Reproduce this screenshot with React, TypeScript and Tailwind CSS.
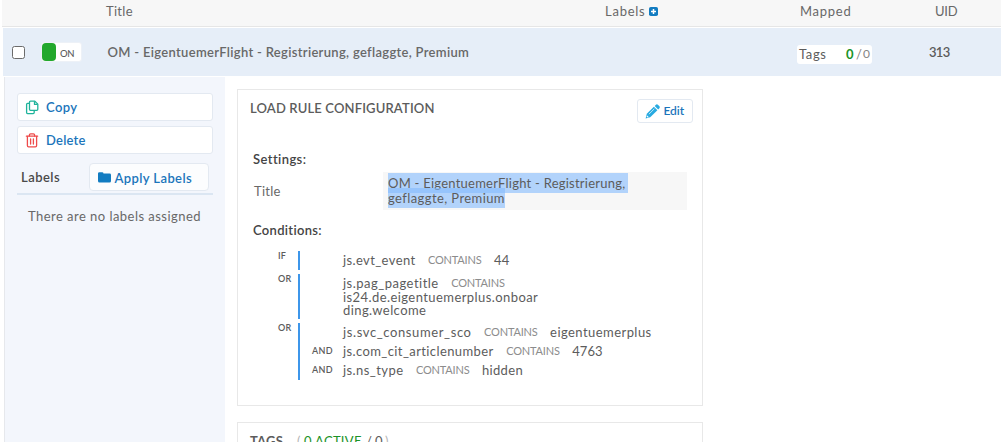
import type { ReactNode } from 'react';

function CopyIcon() {
  return (
    <svg width="14" height="15" viewBox="0 0 14 15" fill="none" stroke="#1fb39b" strokeWidth="1.3" strokeLinejoin="round">
      <path d="M5.5 1.1h4.3l3 3v5.2a1 1 0 0 1-1 1H5.5a1 1 0 0 1-1-1V2.1a1 1 0 0 1 1-1z" />
      <path d="M9.5 1.3v3.1h3.1" />
      <path d="M4.3 3.4H2.6a1 1 0 0 0-1 1v8.2a1 1 0 0 0 1 1h5.6a1 1 0 0 0 1-1v-2" />
    </svg>
  );
}

function TrashIcon() {
  return (
    <svg width="14" height="15" viewBox="0 0 14 15" fill="none" stroke="#ee4b4b" strokeWidth="1.3" strokeLinejoin="round" strokeLinecap="round">
      <path d="M1.4 3.2h11.2" />
      <path d="M4.4 3V2.1a1.2 1.2 0 0 1 1.2-1.2h2.8a1.2 1.2 0 0 1 1.2 1.2V3" />
      <path d="M2.4 3.5v9.1a1.2 1.2 0 0 0 1.2 1.2h6.8a1.2 1.2 0 0 0 1.2-1.2V3.5" />
      <path d="M5.6 6v5M8.4 6v5" />
    </svg>
  );
}

function FolderIcon() {
  return (
    <svg width="13" height="11" viewBox="0 0 13 11" fill="#127cc1">
      <path d="M0 1.6A1.4 1.4 0 0 1 1.4.2h2.7a1.4 1.4 0 0 1 1.4 1.4h5.9A1.5 1.5 0 0 1 13 3.1v5.8a1.5 1.5 0 0 1-1.5 1.5h-10A1.5 1.5 0 0 1 0 8.9z" />
    </svg>
  );
}

function PencilIcon() {
  return (
    <svg width="15" height="15" viewBox="0 0 15 15">
      <path d="M0.6 14.4l1.2-4.6L8.9 2.7l3.5 3.5-7.2 7.1z" fill="#27aae1" />
      <path d="M9.7 1.9l1-1a1.7 1.7 0 0 1 2.4 0l1.1 1.1a1.7 1.7 0 0 1 0 2.4l-1 1z" fill="#27aae1" />
      <path d="M3.9 10.2l5.4-5.4" stroke="#fff" strokeWidth="0.7" />
      <path d="M1.8 11.8l1.5 1.5" stroke="#fff" strokeWidth="1.1" />
    </svg>
  );
}

function Condition({ and, name, nameClass, children, valueClass }: { and?: boolean; name: string; nameClass: string; children?: ReactNode; valueClass?: string }) {
  return (
    <div className="flex h-[19px] items-center">
      <span className="mt-px w-[31px] shrink-0 text-[9px] font-semibold tracking-[0.35px]">{and ? 'AND' : ''}</span>
      <span className={nameClass}>{name}</span>
      <span className="ml-[12.5px] text-[11px] tracking-[-0.19px] text-[#8c8c8c]">CONTAINS</span>
      {children && <span className={`ml-[12.5px] ${valueClass}`}>{children}</span>}
    </div>
  );
}

export default function App() {
  return (
    <div className="h-[442px] w-full overflow-hidden bg-white font-[Lato,sans-serif] text-[13px] leading-[16px] whitespace-nowrap text-[#5c5c5c]">
      <header className="ml-[2px] flex h-[27px] border-b border-[#e6e6e6] bg-[#f7f7f7] pt-[3px] text-[#686868]">
        <span className="ml-[104px] w-[499px] tracking-[0.3px]">Title</span>
        <span className="flex w-[195px] tracking-[0.75px]">
          Labels
          <svg className="mt-1 ml-[4px]" width="9" height="9" viewBox="0 0 9 9">
            <rect width="9" height="9" rx="1.8" fill="#127cc1" />
            <path d="M4.5 2v5M2 4.5h5" stroke="#fff" strokeWidth="1.5" />
          </svg>
        </span>
        <span className="w-[135px] tracking-[0.74px]">Mapped</span>
        <span className="tracking-[-0.2px]">UID</span>
      </header>

      <section className="mt-px ml-[3px] flex h-12 bg-[#e6eef8]">
        <div className="mt-[18px] ml-[9px] size-[13px] rounded-[2.5px] border border-[#6b6b6b] bg-white" />
        <div className="mt-[14px] ml-4 flex h-5 w-[41px] rounded-[3px] border border-[#edf1f7] bg-white">
          <div className="h-[18px] w-[14px] rounded-[4px] bg-[#22a82c]" />
          <span className="mt-[3px] ml-1 text-[9.5px] font-medium tracking-[-0.35px]">ON</span>
        </div>
        <span className="mt-4 ml-[25.5px] w-[689.5px] font-semibold tracking-[0.31px] text-[#686868]">OM - EigentuemerFlight - Registrierung, geflaggte, Premium</span>
        <div className="mt-[17px] flex h-[19px] w-[75px] rounded-[3px] bg-white pt-px pl-[2px]">
          <span className="w-[47px] tracking-[0.61px]">Tags</span>
          <span className="font-bold text-[#1b9328]">0</span>
          <span className="ml-[2.5px] text-[#858585]">/</span>
          <span className="ml-px text-[12px] text-[#858585]">0</span>
        </div>
        <span className="mt-4 ml-[57px] font-semibold tracking-[-0.7px]">313</span>
      </section>

      <div className="mt-px flex h-[365px]">
        <aside className="ml-1 w-[221px] shrink-0 border-l border-[#e6e8ec] bg-[#f3f6fc] pt-4 pl-3">
          <button className="flex h-7 w-[196px] items-center rounded-[3px] border border-[#e3e9f1] bg-white pl-[7px] font-semibold text-[#1b75bb]">
            <CopyIcon />
            <span className="-mt-px ml-[7px] tracking-[0.41px]">Copy</span>
          </button>
          <button className="mt-[5px] flex h-7 w-[196px] items-center rounded-[3px] border border-[#e3e9f1] bg-white pl-[7px] font-semibold text-[#1b75bb]">
            <TrashIcon />
            <span className="-mt-px ml-[7px] tracking-[0.22px]">Delete</span>
          </button>
          <div className="mt-2 flex h-[33px] w-[196px] border-b-2 border-[#dbe6f2] pt-px pl-1">
            <span className="mt-[6px] w-[68px] font-semibold tracking-[0.46px] text-[#4a4a4a]">Labels</span>
            <button className="flex h-7 w-[120px] items-center rounded-[4px] border border-[#e3e9f1] bg-[#fcfdfe] pl-2 font-semibold text-[#1b75bb]">
              <FolderIcon />
              <span className="mt-[2px] ml-[3.5px] tracking-[0.4px]">Apply Labels</span>
            </button>
          </div>
          <p className="mt-[13px] ml-[11px] tracking-[0.46px] text-[#686868]">There are no labels assigned</p>
        </aside>

        <main className="mt-3 ml-3 w-[466px] shrink-0">
          <section className="h-[317px] border border-[#e8e8e8]">
            <div className="flex h-[62px] justify-between pr-[9px] pl-3">
              <h2 className="mt-[10px] font-semibold tracking-[0.15px]">LOAD RULE CONFIGURATION</h2>
              <button className="mt-[9px] flex h-6 w-14 items-center rounded-[3px] border border-[#e3e9f1] bg-white pl-[7px] text-[12px] font-semibold text-[#1b75bb]">
                <PencilIcon />
                <span className="ml-[3.5px] tracking-[-0.08px]">Edit</span>
              </button>
            </div>
            <h3 className="-mt-px ml-[15px] font-semibold tracking-[0.41px] text-[#444]">Settings:</h3>
            <div className="mt-[5px] ml-4 flex h-[38px] items-center">
              <span className="w-[129px] tracking-[0.25px] text-[#686868]">Title</span>
              <div className="h-[38px] w-[304px] bg-[#f7f7f7] pt-1 pl-[5px] leading-[15px]">
                <span className="box-decoration-clone bg-[rgba(132,187,253,0.6)] py-[2px]">
                  <span className="pr-[3px] tracking-[0.24px]">OM - EigentuemerFlight - Registrierung,</span>
                  <br />
                  <span className="tracking-[0.41px]">geflaggte, Premium</span>
                </span>
              </div>
            </div>
            <h3 className="mt-3 ml-[15px] font-semibold tracking-[0.32px] text-[#444]">Conditions:</h3>

            <div className="mt-[13px] ml-10 flex h-[19px]">
              <span className="-mt-[3px] w-5 text-[9px] font-semibold tracking-[0.17px]">IF</span>
              <div className="border-l-2 border-[#3d96ea] pl-3">
                <div className="-mt-px">
                  <Condition name="js.evt_event" nameClass="tracking-[0.39px]" valueClass="tracking-[0.2px]">44</Condition>
                </div>
              </div>
            </div>

            <div className="mt-1 ml-10 flex h-[45px]">
              <span className="-mt-[3px] w-5 text-[9px] font-semibold tracking-[0.3px]">OR</span>
              <div className="border-l-2 border-[#3d96ea] pl-3">
                <div className="-mt-px">
                  <Condition name="js.pag_pagetitle" nameClass="tracking-[0.49px]" />
                </div>
                <p className="-mt-px ml-[31px] leading-[13px] tracking-[0.42px]">
                  is24.de.eigentuemerplus.onboar
                  <br />
                  ding.welcome
                </p>
              </div>
            </div>

            <div className="mt-1 ml-10 flex h-[57px]">
              <span className="-mt-[3px] w-5 text-[9px] font-semibold tracking-[0.3px]">OR</span>
              <div className="border-l-2 border-[#3d96ea] pl-3">
                <div className="-mt-px">
                  <Condition name="js.svc_consumer_sco" nameClass="tracking-[0.61px]" valueClass="tracking-[0.44px]">eigentuemerplus</Condition>
                  <Condition and name="js.com_cit_articlenumber" nameClass="tracking-[0.4px]" valueClass="tracking-[0.08px]">4763</Condition>
                  <Condition and name="js.ns_type" nameClass="tracking-[0.43px]" valueClass="tracking-[0.32px]">hidden</Condition>
                </div>
              </div>
            </div>
          </section>

          <section className="mt-4 h-10 border border-[#e8e8e8]">
            <div className="flex pt-[10px] pl-3">
              <span className="w-[47px] font-bold tracking-[0.2px]">TAGS</span>
              <span className="w-[7px] text-[#b5b5b5]">(</span>
              <span className="w-[62px] tracking-[0.3px] text-[#1b9328]">0 ACTIVE</span>
              <span className="w-[19px] tracking-[-0.1px]">/ 0</span>
              <span className="text-[#b5b5b5]">)</span>
            </div>
          </section>
        </main>
      </div>
    </div>
  );
}
